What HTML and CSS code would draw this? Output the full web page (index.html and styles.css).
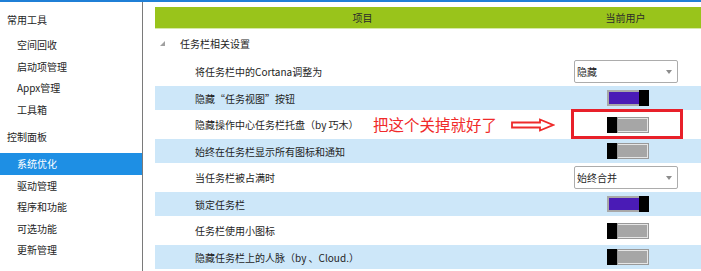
FILE: index.html
```html
<!DOCTYPE html>
<html lang="zh-CN">
<head>
  <meta charset="UTF-8" />
  <title>系统优化</title>
  <link rel="stylesheet" href="styles.css">
</head>
<body>
  <div class="topline"></div>
  <div class="app">
    <div class="sidebar">
      <div class="nav-group first">常用工具</div>
      <div class="nav-item">空间回收</div>
      <div class="nav-item">启动项管理</div>
      <div class="nav-item">Appx管理</div>
      <div class="nav-item">工具箱</div>
      <div class="nav-group">控制面板</div>
      <div class="nav-item active">系统优化</div>
      <div class="nav-item">驱动管理</div>
      <div class="nav-item">程序和功能</div>
      <div class="nav-item">可选功能</div>
      <div class="nav-item">更新管理</div>
    </div>

    <div class="main">
      <div class="grid-head">
        <div class="col-name">项目</div>
        <div class="col-user">当前用户</div>
        <div></div>
      </div>

      <div class="group-row">
        <span class="expander"></span>
        <span>任务栏相关设置</span>
      </div>

      <div class="row">
        <div class="label">将任务栏中的Cortana调整为</div>
        <div class="cell">
          <div class="select"><span>隐藏</span><span class="caret"></span></div>
        </div>
      </div>

      <div class="row alt">
        <div class="label">隐藏“任务视图”按钮</div>
        <div class="cell"><div class="toggle on"><span class="fill"></span><span class="knob"></span></div></div>
      </div>

      <div class="row marked">
        <div class="label">隐藏操作中心任务栏托盘（by 巧木）</div>
        <div class="cell"><div class="toggle off"><span class="knob"></span><span class="fill"></span></div></div>
        <span class="note">把这个关掉就好了</span>
        <svg class="note-arrow" width="44" height="14" viewBox="0 0 44 14">
          <path d="M1 4.5 H29 V1.5 L42 7 L29 12.5 V9.5 H1 Z" fill="none" stroke="#ee2a2a" stroke-width="1.8" stroke-linejoin="miter"/>
        </svg>
        <div class="note-box"></div>
      </div>

      <div class="row alt">
        <div class="label">始终在任务栏显示所有图标和通知</div>
        <div class="cell"><div class="toggle off"><span class="knob"></span><span class="fill"></span></div></div>
      </div>

      <div class="row">
        <div class="label">当任务栏被占满时</div>
        <div class="cell">
          <div class="select small"><span>始终合并</span><span class="caret"></span></div>
        </div>
      </div>

      <div class="row alt">
        <div class="label">锁定任务栏</div>
        <div class="cell"><div class="toggle on"><span class="fill"></span><span class="knob"></span></div></div>
      </div>

      <div class="row">
        <div class="label">任务栏使用小图标</div>
        <div class="cell"><div class="toggle off"><span class="knob"></span><span class="fill"></span></div></div>
      </div>

      <div class="row alt">
        <div class="label">隐藏任务栏上的人脉（by 、Cloud.）</div>
        <div class="cell"><div class="toggle off"><span class="knob"></span><span class="fill"></span></div></div>
      </div>
    </div>
  </div>
</body>
</html>
```

FILE: styles.css
```css
body {
  margin: 0;
  width: 701px;
  height: 271px;
  overflow: hidden;
  background: white;
  font-family: "Noto Sans CJK SC", "Microsoft YaHei", sans-serif;
  font-size: 10px;
  color: #1e1e1e;
}

.topline {
  height: 2px;
  background: #1f7fd6;
}

.app {
  display: flex;
  height: 269px;
}

/* left navigation */
.sidebar {
  width: 142px;
  flex-shrink: 0;
  border-right: 1px solid #7a7a7a;
  padding-top: 7px;
}

.nav-group {
  height: 22px;
  line-height: 22px;
  padding-left: 7px;
  margin: 6px 0 5px;
}

.nav-group.first {
  margin: 0 0 3px;
}

.nav-item {
  height: 21.5px;
  line-height: 21.5px;
  padding-left: 17px;
}

.nav-item.active {
  background: #1e8fe4;
  color: white;
}

/* settings grid */
.main {
  flex: 1;
  padding: 5px 0 0 12px;
}

.grid-head,
.row {
  display: grid;
  grid-template-columns: 415px 111px 1fr;
  align-items: center;
}

.grid-head {
  height: 21px;
  background: #99c41b;
  border-bottom: 1px solid #d6e9a8;
  color: #2b2b2b;
}

.col-name,
.col-user {
  text-align: center;
}

.group-row {
  height: 28px;
  display: flex;
  align-items: center;
}

.expander {
  width: 0;
  height: 0;
  border-style: solid;
  border-width: 0 0 5px 5px;
  border-color: transparent transparent #a0a0a0 transparent;
  margin: 0 15px 0 5px;
}

.row {
  height: 29px;
  position: relative;
}

.row.alt {
  height: 24px;
  background: #cde7f9;
}

.label {
  padding-left: 40px;
  white-space: nowrap;
}

.cell {
  padding-left: 4px;
}

/* dropdown */
.select {
  width: 100px;
  height: 21px;
  border: 1px solid #acacac;
  border-radius: 2px;
  background: white;
  display: flex;
  align-items: center;
  justify-content: space-between;
  padding-left: 2px;
}

.caret {
  width: 0;
  height: 0;
  border-style: solid;
  border-width: 4px 3.5px 0 3.5px;
  border-color: #8c8c8c transparent transparent transparent;
  margin-right: 5px;
}

/* toggles */
.toggle {
  display: flex;
  width: 42px;
  height: 16px;
  margin-left: 33px;
}

.toggle .knob {
  width: 10px;
  background: #000;
}

.toggle .fill {
  flex: 1;
}

.toggle.on .fill {
  background: #4a1bb6;
  border: 2px solid #a8a8a8;
  border-right: none;
}

.toggle.off .fill {
  background: #a6a6a6;
  border: 1px solid #999;
  box-shadow: inset -1px 1px 0 #e6e6e6, inset 0 -1px 0 #e6e6e6;
}

/* red annotation drawn on the screenshot */
.note {
  position: absolute;
  left: 218px;
  top: 3px;
  font-size: 15.5px;
  line-height: 22px;
  color: #f02a2a;
  white-space: nowrap;
}

.note-arrow {
  position: absolute;
  left: 356px;
  top: 8px;
}

.note-box {
  position: absolute;
  left: 416px;
  top: -1px;
  width: 106px;
  height: 24px;
  border: 3px solid #e8202a;
}
```
